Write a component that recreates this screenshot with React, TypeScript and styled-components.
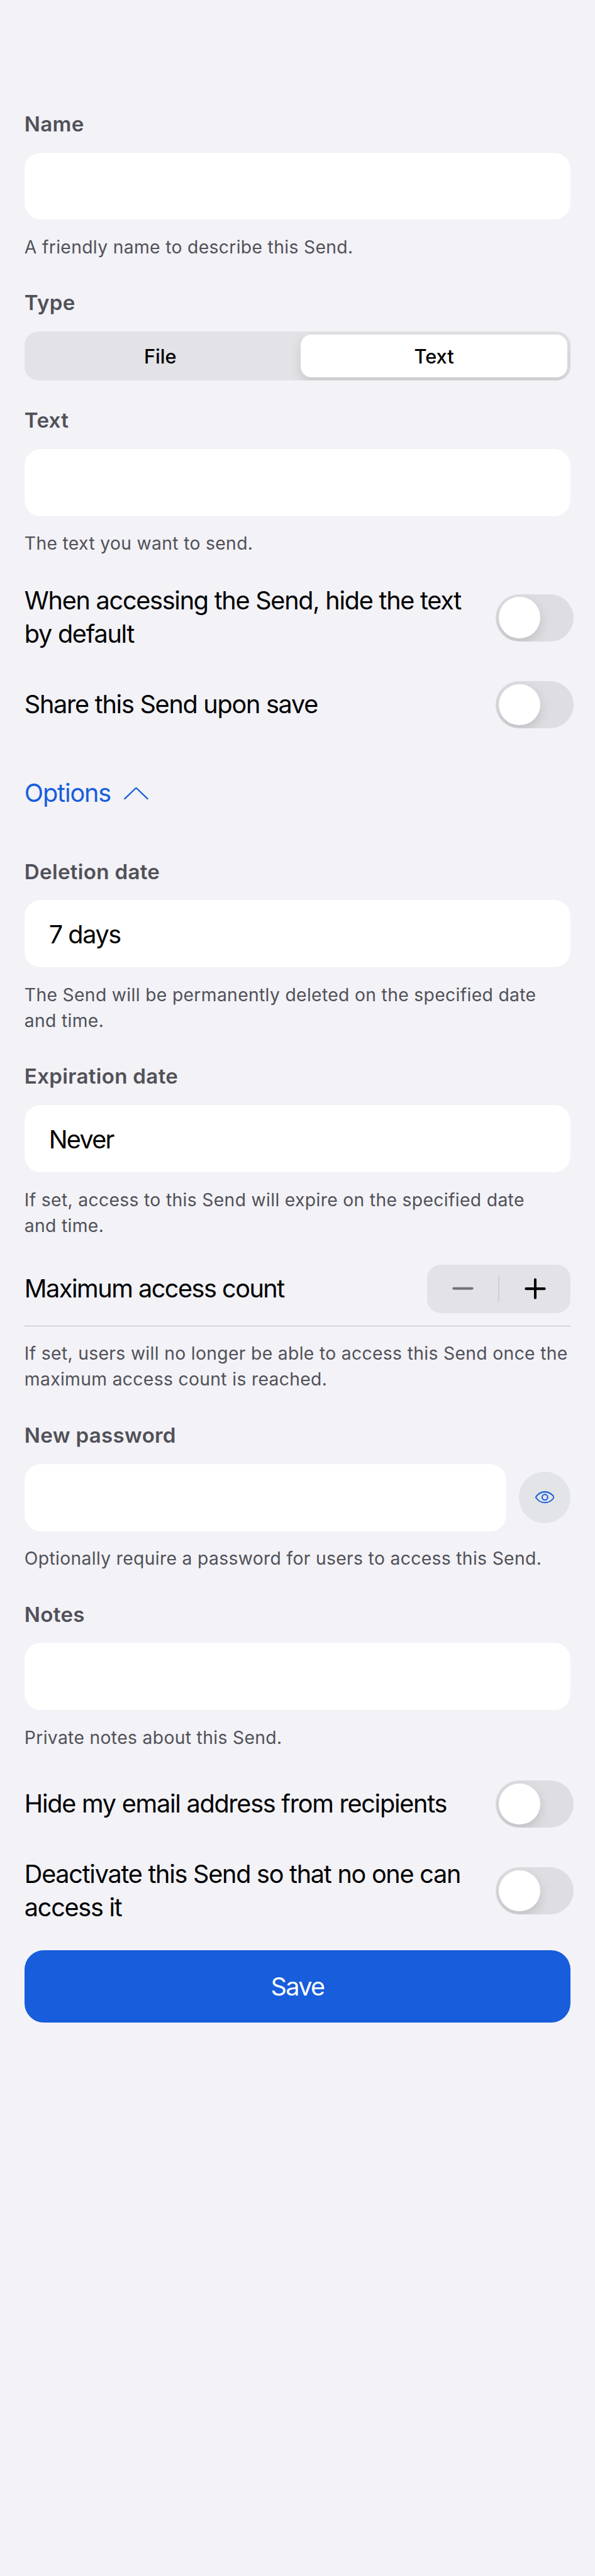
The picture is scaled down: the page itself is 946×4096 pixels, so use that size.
import React from 'react';
import styled, { createGlobalStyle } from 'styled-components';

/* Design units are device pixels on a 1170-wide artboard. */
const SCALE = 0.8088;
const u = (n: number) => `${(n * SCALE).toFixed(3)}px`;

const color = {
  background: '#f2f2f7',
  field: '#ffffff',
  primary: '#175ddc',
  text: '#000000',
  secondary: '#515158',
  control: '#e3e2e7',
  track: '#dedde2',
  icon: '#e2e4e8',
  separator: '#bbbbbf',
};

const GlobalStyle = createGlobalStyle`
  html, body {
    margin: 0;
    background: ${color.background};
  }
  *, *::before, *::after {
    box-sizing: border-box;
  }
  body {
    font-family: Inter, 'Liberation Sans', sans-serif;
    -webkit-font-smoothing: antialiased;
  }
  button, input {
    font: inherit;
    border: 0;
    padding: 0;
    outline: none;
  }
`;

const Page = styled.main`
  display: flex;
  flex-direction: column;
  height: 4096px;
  padding: ${u(216)} ${u(48)} 0;
  background: ${color.background};
`;

const Section = styled.section<{ $space: number }>`
  display: flex;
  flex-direction: column;
  margin-bottom: ${p => u(p.$space)};
`;

const Label = styled.label`
  margin-bottom: ${u(28)};
  color: ${color.secondary};
  font-size: ${u(41)};
  font-weight: 600;
  line-height: ${u(56)};
  letter-spacing: ${u(0.35)};
`;

const Helper = styled.p`
  margin: ${u(29)} 0 ${u(-1)};
  color: ${color.secondary};
  font-size: ${u(35)};
  line-height: ${u(51)};
  letter-spacing: ${u(0.4)};
  white-space: pre-line;
`;

const FieldRow = styled.div`
  display: flex;
  align-items: center;
  gap: ${u(24)};
`;

const Field = styled.input<{ $tracking?: number }>`
  flex: 1;
  min-width: 0;
  height: ${u(132)};
  padding: ${u(2)} ${u(48)} 0;
  border-radius: ${u(32)};
  background: ${color.field};
  color: ${color.text};
  font-size: ${u(49)};
  letter-spacing: ${p => u(p.$tracking ?? -1.75)};
`;

const Segments = styled.div`
  display: grid;
  grid-template-columns: ${u(537)} 1fr;
  height: ${u(96)};
  padding: ${u(6)};
  border-radius: ${u(27)};
  overflow: hidden;
  background: ${color.control};
`;

const Segment = styled.button<{ $selected?: boolean }>`
  padding-right: ${p => (p.$selected ? 0 : u(15))};
  border-radius: ${u(21)};
  background: ${p => (p.$selected ? color.field : 'transparent')};
  box-shadow: ${p =>
    p.$selected ? `0 ${u(9)} ${u(24)} rgba(0, 0, 0, 0.12), 0 ${u(9)} ${u(3)} rgba(0, 0, 0, 0.01)` : 'none'};
  color: ${color.text};
  font-size: ${u(38)};
  font-weight: 500;
`;

const ToggleRow = styled.div<{ $space: number }>`
  display: flex;
  align-items: center;
  justify-content: space-between;
  gap: ${u(24)};
  margin-right: ${u(-6)};
  margin-bottom: ${p => u(p.$space)};
`;

const RowText = styled.span<{ $tracking?: number }>`
  padding: ${u(1)} 0;
  color: ${color.text};
  font-size: ${u(49)};
  line-height: ${u(65.5)};
  letter-spacing: ${p => u(p.$tracking ?? -1.58)};
`;

const Switch = styled.button`
  display: flex;
  flex: none;
  align-items: center;
  width: ${u(153)};
  height: ${u(93)};
  padding: ${u(6)};
  border-radius: ${u(46.5)};
  overflow: hidden;
  background: ${color.track};
`;

const Knob = styled.span`
  width: ${u(81)};
  height: ${u(81)};
  border-radius: 50%;
  background: ${color.field};
  box-shadow: 0 ${u(9)} ${u(24)} rgba(0, 0, 0, 0.13), 0 ${u(9)} ${u(3)} rgba(0, 0, 0, 0.01);
`;

const OptionsButton = styled.button`
  display: flex;
  align-items: center;
  align-self: flex-start;
  gap: ${u(26)};
  height: ${u(66)};
  margin-bottom: ${u(94)};
  background: transparent;
  color: ${color.primary};
  font-size: ${u(49)};
  line-height: ${u(66)};
  letter-spacing: ${u(-1.4)};
`;

const OptionsText = styled.span`
  padding-top: ${u(2)};
`;

const Chevron = styled.svg`
  display: block;
  width: ${u(48)};
  height: ${u(24)};
  margin-top: ${u(2)};
`;

const StepperRow = styled.div`
  display: flex;
  align-items: center;
  justify-content: space-between;
  padding-bottom: ${u(24)};
  border-bottom: 1px solid ${color.separator};
`;

const Stepper = styled.div`
  display: flex;
  align-items: center;
  width: ${u(282)};
  height: ${u(96)};
  border-radius: ${u(27)};
  background: ${color.control};
`;

const StepButton = styled.button<{ $disabled?: boolean }>`
  display: flex;
  flex: 1;
  align-items: center;
  justify-content: center;
  background: transparent;
  color: ${p => (p.$disabled ? '#737277' : color.text)};
`;

const StepIcon = styled.svg`
  display: block;
  width: ${u(42)};
  height: ${u(42)};
`;

const StepDivider = styled.span`
  width: ${u(3)};
  height: ${u(54)};
  border-radius: ${u(1.5)};
  background: #d0cfd4;
`;

const RoundButton = styled.button`
  display: flex;
  flex: none;
  align-items: center;
  justify-content: center;
  width: ${u(102)};
  height: ${u(102)};
  border-radius: 50%;
  background: ${color.icon};
  color: ${color.primary};
`;

const EyeIcon = styled.svg`
  display: block;
  width: ${u(38)};
  height: ${u(24)};
`;

const SaveButton = styled.button`
  flex: none;
  height: ${u(142)};
  padding-top: ${u(1)};
  border-radius: ${u(38)};
  background: ${color.primary};
  color: #ffffff;
  font-size: ${u(49)};
  letter-spacing: ${u(-2.1)};
`;

function Toggle({ text, space }: { text: string; space: number }) {
  return (
    <ToggleRow $space={space}>
      <RowText>{text}</RowText>
      <Switch role="switch" aria-checked="false" aria-label={text}>
        <Knob />
      </Switch>
    </ToggleRow>
  );
}

type TextFieldProps = {
  label: string;
  helper: string;
  value?: string;
  space?: number;
  tracking?: number;
  accessory?: React.ReactNode;
};

function TextField({ label, helper, value = '', space = 57, tracking, accessory }: TextFieldProps) {
  return (
    <Section $space={space}>
      <Label>{label}</Label>
      <FieldRow>
        <Field aria-label={label} defaultValue={value} $tracking={tracking} />
        {accessory}
      </FieldRow>
      <Helper>{helper}</Helper>
    </Section>
  );
}

export default function App() {
  return (
    <>
      <GlobalStyle />
      <Page>
        <TextField label="Name" helper="A friendly name to describe this Send." />

        <Section $space={51}>
          <Label>Type</Label>
          <Segments>
            <Segment>File</Segment>
            <Segment $selected>Text</Segment>
          </Segments>
        </Section>

        <TextField label="Text" helper="The text you want to send." space={54} />

        <Toggle text="When accessing the Send, hide the text by default" space={58} />
        <Toggle text="Share this Send upon save" space={94} />

        <OptionsButton>
          <OptionsText>Options</OptionsText>
          <Chevron viewBox="0 0 48 24" fill="none" stroke="currentColor" strokeWidth="2.8" strokeLinecap="round" strokeLinejoin="round">
            <path d="M1.5 22.4 L22.6 2.1 Q24 .9 25.4 2.1 L46.5 22.4" />
          </Chevron>
        </OptionsButton>

        <TextField
          label="Deletion date"
          value="7 days"
          helper={'The Send will be permanently deleted on the specified date\nand time.'}
        />
        <TextField
          label="Expiration date"
          value="Never"
          tracking={-2.1}
          helper={'If set, access to this Send will expire on the specified date\nand time.'}
          space={51}
        />

        <Section $space={57}>
          <StepperRow>
            <RowText $tracking={-1.87}>Maximum access count</RowText>
            <Stepper>
              <StepButton $disabled aria-label="Decrease">
                <StepIcon viewBox="0 0 42 42" fill="none" stroke="currentColor" strokeWidth="5" strokeLinecap="round">
                  <path d="M2.9 20.6H39.1" />
                </StepIcon>
              </StepButton>
              <StepDivider />
              <StepButton aria-label="Increase">
                <StepIcon viewBox="0 0 42 42" fill="none" stroke="currentColor" strokeWidth="5" strokeLinecap="round">
                  <path d="M2.9 21.2H39.1M21 3.1V39.3" />
                </StepIcon>
              </StepButton>
            </Stepper>
          </StepperRow>
          <Helper>If set, users will no longer be able to access this Send once the maximum access count is reached.</Helper>
        </Section>

        <TextField
          label="New password"
          helper="Optionally require a password for users to access this Send."
          accessory={
            <RoundButton aria-label="Show password">
              <EyeIcon viewBox="0 0 38 24" fill="none" stroke="currentColor" strokeWidth="2.5" strokeLinejoin="round">
                <path d="M1.9 13.6 Q.8 12 1.9 10.4 C6 5 12 1.4 19 1.4 S32 5 36.1 10.4 Q37.2 12 36.1 13.6 C32 19 26 22.6 19 22.6 S6 19 1.9 13.6Z" />
                <circle cx="19" cy="12" r="5.4" />
              </EyeIcon>
            </RoundButton>
          }
        />
        <TextField label="Notes" helper="Private notes about this Send." space={59} />

        <Toggle text="Hide my email address from recipients" space={58} />
        <Toggle text="Deactivate this Send so that no one can access it" space={50} />

        <SaveButton>Save</SaveButton>
      </Page>
    </>
  );
}
